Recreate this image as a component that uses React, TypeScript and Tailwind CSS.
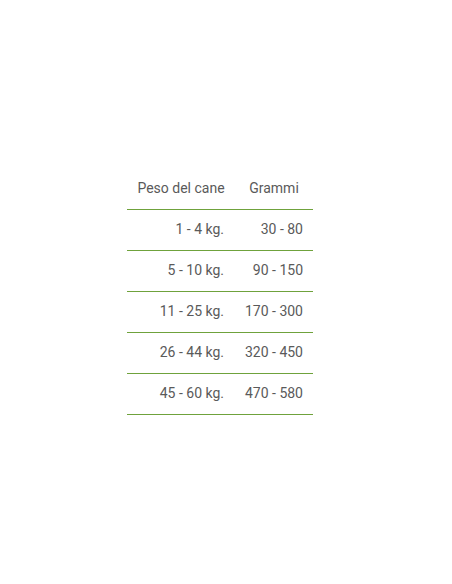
const rows = [
  ["1 - 4 kg.", "30 - 80"],
  ["5 - 10 kg.", "90 - 150"],
  ["11 - 25 kg.", "170 - 300"],
  ["26 - 44 kg.", "320 - 450"],
  ["45 - 60 kg.", "470 - 580"],
];

export default function App() {
  return (
    <div className="min-h-[584px] bg-white pt-[168px] pl-[127px] font-['Roboto',sans-serif] text-[14px] text-[#5a5a5a]">
      <table className="w-[186px] border-collapse">
        <thead>
          <tr className="h-[41px] border-b border-[#6fa23c]">
            <th className="w-[108px] text-center font-normal">Peso del cane</th>
            <th className="text-center font-normal">Grammi</th>
          </tr>
        </thead>
        <tbody>
          {rows.map(([peso, grammi]) => (
            <tr key={peso} className="h-[41px] border-b border-[#6fa23c]">
              <td className="pr-[11px] text-right">{peso}</td>
              <td className="pr-[10px] text-right">{grammi}</td>
            </tr>
          ))}
        </tbody>
      </table>
    </div>
  );
}
